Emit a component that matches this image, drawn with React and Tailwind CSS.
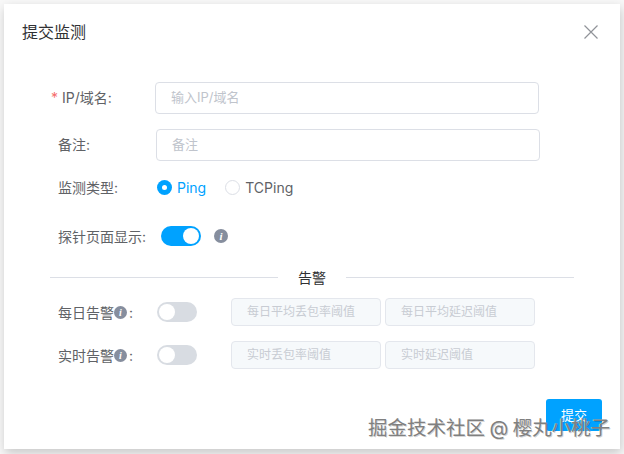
const FONT = "font-['Inter','Noto_Sans_CJK_SC',sans-serif]";

const InfoDot = ({ className }) => (
  <span className={`flex items-center justify-center rounded-full bg-[#868e9e] text-white font-['Liberation_Serif',serif] italic font-bold ${className}`}>
    i
  </span>
);

const Toggle = ({ on, className = "" }) => (
  <span
    className={`flex h-5 w-10 shrink-0 items-center rounded-full ${
      on ? "justify-end bg-[#00a2ff]" : "justify-start bg-[#d8dce2]"
    } ${className}`}
  >
    <span className="mx-[2px] h-4 w-4 rounded-full bg-white" />
  </span>
);

const TextField = ({ placeholder, className }) => (
  <div className={`flex h-8 items-center rounded border border-[#dcdfe6] bg-white pl-[15px] text-[13px] text-[#c0c4cc] ${className}`}>
    {placeholder}
  </div>
);

const Threshold = ({ placeholder }) => (
  <div className="flex h-7 w-[150px] items-center rounded border border-[#e4e7ed] bg-[#f6f9fb] pl-[15px] text-xs text-[#c8ccd3]">
    {placeholder}
  </div>
);

const AlertRow = ({ label, items, className }) => (
  <div className={`flex h-7 items-center ${className}`}>
    <div className="flex w-[103px] items-center pl-[54px] text-[14px] whitespace-nowrap text-[#606266]">
      {label}
      <InfoDot className="h-[13px] w-[13px] shrink-0 text-[10px]" />
      <span className="ml-[2px]">:</span>
    </div>
    <Toggle className="ml-[50px]" />
    <div className="ml-[34px] flex gap-1">
      {items.map((t) => (
        <Threshold key={t} placeholder={t} />
      ))}
    </div>
  </div>
);

export default function App() {
  return (
    <div className={`relative h-[454px] w-[624px] overflow-hidden bg-[#f8f8f8] pl-1 pt-1 ${FONT}`}>
      <div className="h-[445px] w-[616px] bg-white shadow-[1px_4px_10px_rgba(0,0,0,0.2)]">
        {/* Header */}
        <div className="flex h-[56px] items-center justify-between pl-[18px] pr-[21px]">
          <span className="text-base text-[#303133]">提交监测</span>
          <svg width="16" height="16" viewBox="0 0 16 16" className="mt-[-1px] text-[#909399]">
            <path d="M1.5 1.5 14.5 14.5M14.5 1.5 1.5 14.5" stroke="currentColor" strokeWidth="1.2" fill="none" />
          </svg>
        </div>

        {/* Form */}
        <div className="mt-[22px] flex h-8 items-center">
          <div className="mb-[2px] flex w-[151px] items-center pl-[47px] text-[14px] text-[#606266]">
            <span className="mr-[4px] text-[#f56c6c]">*</span>IP/域名:
          </div>
          <TextField placeholder="输入IP/域名" className="w-[384px]" />
        </div>

        <div className="mt-[15px] flex h-8 items-center">
          <div className="mb-[2px] w-[152px] pl-[54px] text-[14px] text-[#606266]">备注:</div>
          <TextField placeholder="备注" className="w-[384px]" />
        </div>

        <div className="mt-[10px] flex h-[32px] items-center">
          <div className="w-[153px] pl-[54px] text-[14px] text-[#606266]">监测类型:</div>
          <span className="flex h-[15px] w-[15px] items-center justify-center rounded-full bg-[#00a2ff]">
            <span className="h-[5px] w-[5px] rounded-full bg-white" />
          </span>
          <span className="ml-[5px] text-[14px] text-[#00a2ff]">Ping</span>
          <span className="ml-[19px] h-[15px] w-[15px] rounded-full border border-[#dcdfe6] bg-white" />
          <span className="ml-[5px] text-[14px] text-[#606266]">TCPing</span>
        </div>

        <div className="mt-[17px] flex h-[32px] items-center">
          <div className="w-[157px] pl-[54px] text-[14px] text-[#606266]">探针页面显示:</div>
          <Toggle on />
          <InfoDot className="ml-[13px] h-[14px] w-[14px] text-[11px]" />
        </div>

        {/* Alert divider */}
        <div className="mt-[13px] flex h-[24px] items-center pl-[46px] pr-[46px]">
          <div className="h-px flex-1 bg-[#dcdfe6]" />
          <span className="px-[20px] text-[14px] text-[#303133]">告警</span>
          <div className="h-px flex-1 bg-[#dcdfe6]" />
        </div>

        <AlertRow label="每日告警" items={["每日平均丢包率阈值", "每日平均延迟阈值"]} className="mt-[9px]" />
        <AlertRow label="实时告警" items={["实时丢包率阈值", "实时延迟阈值"]} className="mt-[15px]" />

        {/* Footer */}
        <div className="mt-[30px] flex justify-end pr-[18px]">
          <button className="h-8 w-14 rounded-[3px] bg-[#00a2ff] pt-[1px] text-[13px] text-white">提交</button>
        </div>
      </div>

      {/* Watermark */}
      <div className="absolute left-[368px] top-[413px] text-[19.5px] leading-[30px] whitespace-nowrap text-[#808080] [word-spacing:-1px] [text-shadow:1px_1px_0_rgba(0,0,0,0.18),-1px_0_0_rgba(255,255,255,0.6)]">
        掘金技术社区 @ 樱丸小桃子
      </div>
    </div>
  );
}
